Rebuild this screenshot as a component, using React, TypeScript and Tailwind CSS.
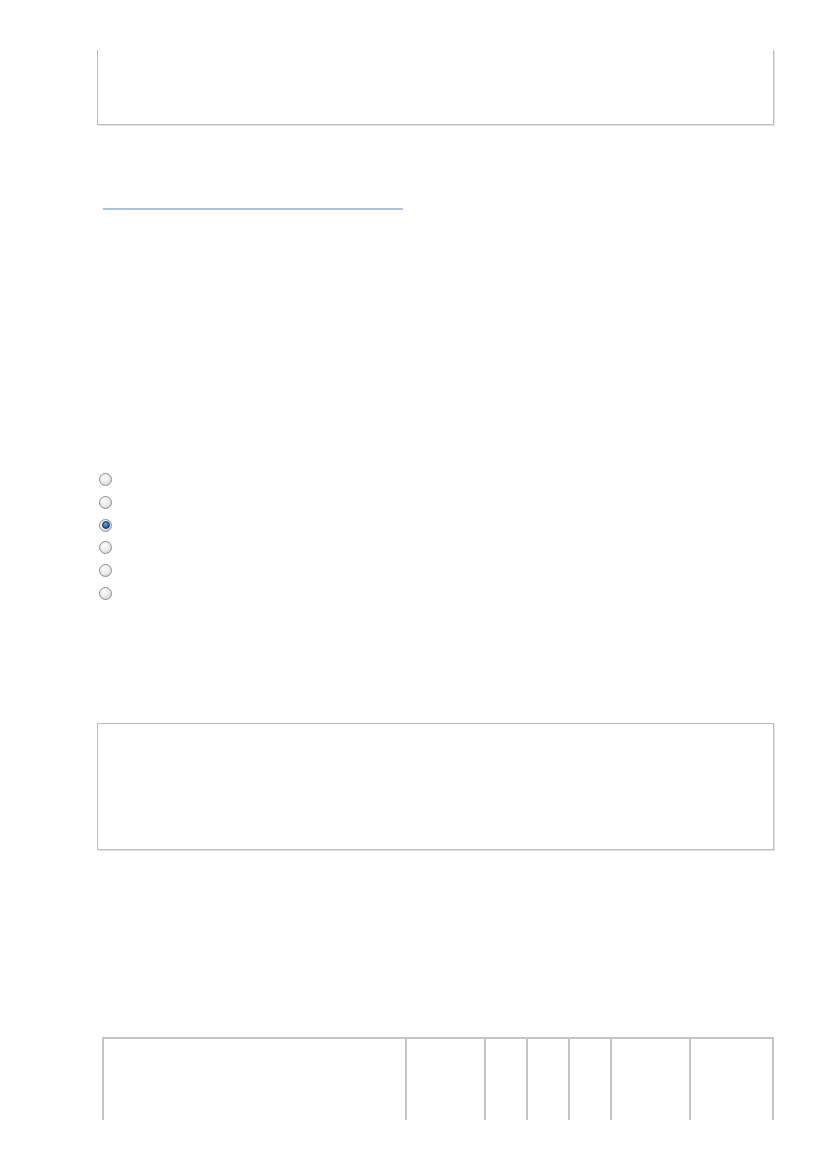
import React from 'react';

const radios = [false, false, true, false, false, false];
const columns = ['w-[303px]', 'w-[79px]', 'w-[42px]', 'w-[42px]', 'w-[42px]', 'w-[79px]', 'flex-1'];

const Radio: React.FC<{ checked: boolean }> = ({ checked }) => (
  <div className="flex h-[13px] w-[13px] items-center justify-center rounded-full border border-[#8e8e8e] bg-[radial-gradient(circle_at_40%_35%,#ffffff_0%,#ececec_45%,#c8c8c8_100%)]">
    {checked && (
      <div className="h-[8px] w-[8px] rounded-full border border-[#0a3765] bg-[radial-gradient(circle_at_40%_35%,#58aaea_0%,#1b68b0_60%,#0a4583_100%)]" />
    )}
  </div>
);

export default function App() {
  return (
    <div className="flex h-[1169px] w-[827px] flex-col overflow-hidden bg-white pl-[97px] pr-[53px] font-['Liberation_Sans',sans-serif]">
      <div className="mt-[50px] h-[75px] border-x border-b border-[#bdbdbd] shadow-[1px_1px_0_#e6e6e6]" />

      <div className="ml-[6px] mt-[83px] h-[2px] w-[300px] bg-[#a9c3e6]" />

      <div className="ml-[2px] mt-[263px] flex flex-col gap-[9.8px]">
        {radios.map((checked, i) => (
          <Radio key={i} checked={checked} />
        ))}
      </div>

      <div className="mt-[123px] h-[127px] border border-[#bdbdbd] shadow-[1px_1px_0_#e6e6e6]" />

      <div className="ml-[5px] mt-[187px] flex h-[83px] border-t-2 border-l-2 border-[#c4c4c4]">
        {columns.map((w, i) => (
          <div key={i} className={`${w} h-full border-r-2 border-[#c4c4c4]`} />
        ))}
      </div>
    </div>
  );
}
